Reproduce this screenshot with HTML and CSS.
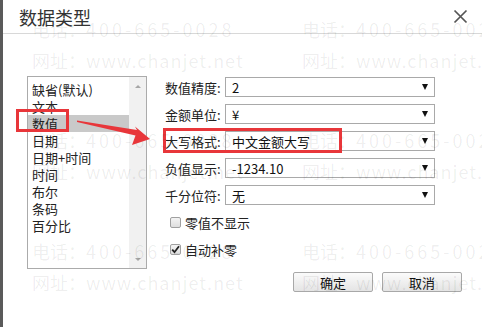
FILE: index.html
```html
<!DOCTYPE html>
<html lang="zh-CN">
<head>
    <meta charset="UTF-8">
    <title>数据类型</title>
    <link rel="stylesheet" href="styles.css">
</head>
<body>

<div class="dialog">
    <div class="dialog-head">
        <span class="dialog-title">数据类型</span>
        <span class="dialog-close">
            <svg width="15" height="15" viewBox="0 0 15 15"><path d="M1.5 1.5 L13.5 13.5 M13.5 1.5 L1.5 13.5" stroke="#555" stroke-width="1.7" fill="none"/></svg>
        </span>
    </div>

    <div class="dialog-body">
        <div class="main">
            <div class="type-list">
                <ul class="type-items">
                    <li>缺省(默认)</li>
                    <li>文本</li>
                    <li class="selected">数值<span class="mark mark-item"></span></li>
                    <li>日期</li>
                    <li>日期+时间</li>
                    <li>时间</li>
                    <li>布尔</li>
                    <li>条码</li>
                    <li>百分比</li>
                </ul>
                <div class="scrollbar">
                    <span class="scroll-up"></span>
                    <span class="scroll-down"></span>
                </div>
            </div>

            <div class="fields">
                <div class="field">
                    <label>数值精度:</label>
                    <div class="select"><span>2</span><i class="caret"></i></div>
                </div>
                <div class="field">
                    <label>金额单位:</label>
                    <div class="select"><span>¥</span><i class="caret"></i></div>
                </div>
                <div class="field">
                    <label>大写格式:</label>
                    <div class="select"><span>中文金额大写</span><i class="caret"></i></div>
                    <span class="mark mark-field"></span>
                </div>
                <div class="field">
                    <label>负值显示:</label>
                    <div class="select"><span>-1234.10</span><i class="caret"></i></div>
                </div>
                <div class="field">
                    <label>千分位符:</label>
                    <div class="select"><span>无</span><i class="caret"></i></div>
                </div>
                <div class="check">
                    <span class="box"></span>零值不显示
                </div>
                <div class="check">
                    <span class="box"><svg width="9" height="9" viewBox="0 0 9 9"><path d="M1.2 4.6 L3.5 7.2 L8 1.2" stroke="#222" stroke-width="1.8" fill="none"/></svg></span>自动补零
                </div>
            </div>
        </div>

        <div class="footer">
            <button type="button">确定</button>
            <button type="button">取消</button>
        </div>
    </div>

    <div class="watermark">
        <div class="wm-block">
            <div class="wm-line"><span>电话：<b class="wm-num">400-665-0028</b></span><span>电话：<b class="wm-num">400-665-0028</b></span></div>
            <div class="wm-line"><span>网址：<b class="wm-url">www.chanjet.net</b></span><span>网址：<b class="wm-url">www.chanjet.net</b></span></div>
        </div>
        <div class="wm-block">
            <div class="wm-line"><span>电话：<b class="wm-num">400-665-0028</b></span><span>电话：<b class="wm-num">400-665-0028</b></span></div>
            <div class="wm-line"><span>网址：<b class="wm-url">www.chanjet.net</b></span><span>网址：<b class="wm-url">www.chanjet.net</b></span></div>
        </div>
        <div class="wm-block">
            <div class="wm-line"><span>电话：<b class="wm-num">400-665-0028</b></span><span>电话：<b class="wm-num">400-665-0028</b></span></div>
            <div class="wm-line"><span>网址：<b class="wm-url">www.chanjet.net</b></span><span>网址：<b class="wm-url">www.chanjet.net</b></span></div>
        </div>
    </div>

    <svg class="mark-arrow" width="482" height="327" viewBox="0 0 482 327">
        <polygon points="77,120.5 137,130 135,126.5 150,139 132,145 135.5,135.5 77,122" fill="#e8363a"/>
    </svg>
</div>

</body>
</html>
```

FILE: styles.css
```css
* {
    box-sizing: border-box;
}

body {
    margin: 0;
    font-family: "Noto Sans CJK SC", "Noto Sans", sans-serif;
    font-size: 13px;
    color: #222;
    background-color: #fff;
}

.dialog {
    position: relative;
    width: 482px;
    height: 327px;
    background-color: #fff;
    border-left: 3px solid #5a5a5a;
    overflow: hidden;
}

.dialog-head {
    height: 34px;
    display: flex;
    align-items: center;
    justify-content: space-between;
    padding: 0 14px 0 16px;
    border-bottom: 1px solid #d8d8d8;
}

.dialog-title {
    font-size: 18px;
    color: #333;
}

.dialog-close {
    display: flex;
}

.dialog-body {
    padding: 42px 20px 0 24px;
}

.main {
    display: flex;
    gap: 18px;
}

/* type list */

.type-list {
    width: 120px;
    height: 193px;
    border: 1px solid #ababab;
    display: flex;
}

.type-items {
    flex: 1;
    list-style: none;
    margin: 0;
    padding: 4px 0 0 0;
}

.type-items li {
    position: relative;
    height: 17px;
    line-height: 17px;
    padding-left: 4px;
    white-space: nowrap;
}

.type-items li.selected {
    background-color: #c9c9c9;
}

.scrollbar {
    width: 17px;
    background-color: #f1f1f1;
    display: flex;
    flex-direction: column;
    justify-content: space-between;
    align-items: center;
    padding: 8px 0 7px;
}

.scroll-up,
.scroll-down {
    width: 0;
    height: 0;
    border-left: 3px solid transparent;
    border-right: 3px solid transparent;
}

.scroll-up {
    border-bottom: 3px solid #a6a6a6;
}

.scroll-down {
    border-top: 3px solid #a6a6a6;
}

/* fields */

.fields {
    padding-top: 1px;
}

.field {
    position: relative;
    display: flex;
    align-items: center;
    height: 20px;
    margin-bottom: 7px;
}

.field label {
    width: 60px;
    color: #222;
    white-space: nowrap;
}

.select {
    width: 210px;
    height: 20px;
    border: 1px solid #a9a9a9;
    display: flex;
    align-items: center;
    justify-content: space-between;
    padding: 0 6px 0 6px;
    color: #111;
    background-color: #fff;
}

.caret {
    width: 0;
    height: 0;
    border-left: 3px solid transparent;
    border-right: 3px solid transparent;
    border-top: 6px solid #111;
}

.check {
    display: flex;
    align-items: center;
    gap: 4px;
    height: 20px;
    padding-left: 5px;
    margin-bottom: 7px;
}

.check .box {
    width: 11px;
    height: 11px;
    border: 1px solid #a0a0a0;
    border-radius: 2px;
    background: linear-gradient(#f4f4f4, #dedede);
    display: flex;
    align-items: center;
    justify-content: center;
}

/* footer */

.footer {
    display: flex;
    justify-content: flex-end;
    gap: 9px;
    margin-top: 3px;
}

.footer button {
    width: 80px;
    height: 20px;
    padding: 0;
    border: 1px solid #a8a8a8;
    border-radius: 2px;
    background: linear-gradient(#fbfbfb, #e4e4e4);
    font-family: inherit;
    font-size: 13px;
    color: #111;
}

/* red annotation marks */

.mark {
    position: absolute;
    border: 3px solid #e8363a;
    pointer-events: none;
}

.mark-item {
    left: -12px;
    top: -6px;
    width: 53px;
    height: 23px;
}

.mark-field {
    left: -2px;
    top: -3px;
    width: 179px;
    height: 25px;
}

.mark-arrow {
    position: absolute;
    left: -3px;
    top: 0;
    pointer-events: none;
}

/* watermark */

.watermark {
    position: absolute;
    inset: 0;
    padding-top: 14px;
    display: flex;
    flex-direction: column;
    gap: 49px;
    font-size: 18px;
    line-height: 31px;
    color: rgba(0, 0, 0, 0.07);
    pointer-events: none;
    white-space: nowrap;
}

.wm-line {
    display: flex;
    padding-left: 29px;
}

.wm-line span {
    width: 270px;
    flex-shrink: 0;
}

.wm-num {
    font-weight: normal;
    letter-spacing: 3px;
}

.wm-url {
    font-weight: normal;
    letter-spacing: 1px;
}
```
